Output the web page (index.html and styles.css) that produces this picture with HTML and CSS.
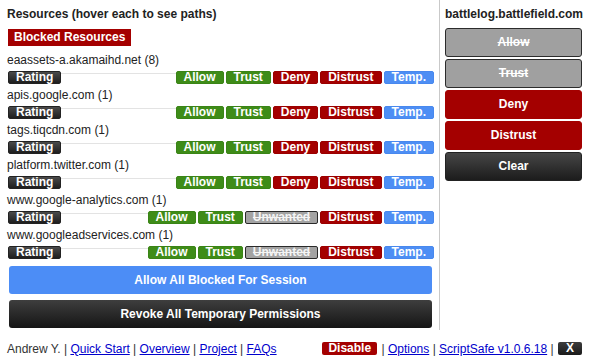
FILE: index.html
```html
<!DOCTYPE html>
<html>
<head>
<meta charset="utf-8">
<title>ScriptSafe</title>
<link rel="stylesheet" href="styles.css">
</head>
<body>
<div class="main">
  <section class="left">
    <h1 class="title">Resources (hover each to see paths)</h1>
    <div class="badge">Blocked Resources</div>
    <div class="list">
      <div class="res">
        <div class="domain">eaassets-a.akamaihd.net (8)</div>
        <div class="actions">
          <span class="btn rating">Rating</span><span class="rule"></span>
          <span class="btn green">Allow</span><span class="btn green">Trust</span><span class="btn red">Deny</span><span class="btn red">Distrust</span><span class="btn blue">Temp.</span>
        </div>
      </div>
      <div class="res">
        <div class="domain">apis.google.com (1)</div>
        <div class="actions">
          <span class="btn rating">Rating</span><span class="rule"></span>
          <span class="btn green">Allow</span><span class="btn green">Trust</span><span class="btn red">Deny</span><span class="btn red">Distrust</span><span class="btn blue">Temp.</span>
        </div>
      </div>
      <div class="res">
        <div class="domain">tags.tiqcdn.com (1)</div>
        <div class="actions">
          <span class="btn rating">Rating</span><span class="rule"></span>
          <span class="btn green">Allow</span><span class="btn green">Trust</span><span class="btn red">Deny</span><span class="btn red">Distrust</span><span class="btn blue">Temp.</span>
        </div>
      </div>
      <div class="res">
        <div class="domain">platform.twitter.com (1)</div>
        <div class="actions">
          <span class="btn rating">Rating</span><span class="rule"></span>
          <span class="btn green">Allow</span><span class="btn green">Trust</span><span class="btn red">Deny</span><span class="btn red">Distrust</span><span class="btn blue">Temp.</span>
        </div>
      </div>
      <div class="res">
        <div class="domain">www.google-analytics.com (1)</div>
        <div class="actions">
          <span class="btn rating">Rating</span><span class="rule"></span>
          <span class="btn green">Allow</span><span class="btn green">Trust</span><span class="btn off">Unwanted</span><span class="btn red">Distrust</span><span class="btn blue">Temp.</span>
        </div>
      </div>
      <div class="res">
        <div class="domain">www.googleadservices.com (1)</div>
        <div class="actions">
          <span class="btn rating">Rating</span><span class="rule"></span>
          <span class="btn green">Allow</span><span class="btn green">Trust</span><span class="btn off">Unwanted</span><span class="btn red">Distrust</span><span class="btn blue">Temp.</span>
        </div>
      </div>
    </div>
    <div class="big big-blue">Allow All Blocked For Session</div>
    <div class="big big-dark">Revoke All Temporary Permissions</div>
  </section>
  <aside class="right">
    <div class="site">battlelog.battlefield.com</div>
    <div class="sbtn s-off">Allow</div>
    <div class="sbtn s-off">Trust</div>
    <div class="sbtn s-red">Deny</div>
    <div class="sbtn s-red">Distrust</div>
    <div class="sbtn s-dark">Clear</div>
  </aside>
</div>
<footer class="footer">
  <div class="f-left">Andrew Y. <span class="pipe">|</span> <a href="#">Quick Start</a> <span class="pipe">|</span> <a href="#">Overview</a> <span class="pipe">|</span> <a href="#">Project</a> <span class="pipe">|</span> <a href="#">FAQs</a></div>
  <div class="f-right"><span class="fbtn f-red">Disable</span> <span class="pipe">|</span> <a href="#">Options</a> <span class="pipe">|</span> <a href="#">ScriptSafe v1.0.6.18</a> <span class="pipe">|</span> <span class="fbtn f-dark">X</span></div>
</footer>
</body>
</html>
```
FILE: styles.css
```css
* { box-sizing: border-box; }
html, body { margin: 0; padding: 0; background: #fff; }
body {
  font-family: "Liberation Sans", Arial, sans-serif;
  font-size: 12px;
  color: #222;
  width: 605px;
  height: 362px;
  overflow: hidden;
}
.main { display: flex; height: 330px; }
.left {
  width: 440px;
  padding: 6px 5px 0 7px;
  border-right: 1px solid #c9c9c9;
  display: flex;
  flex-direction: column;
}
.title { margin: 0; font-size: 12px; font-weight: bold; line-height: 16px; height: 16px; }
.badge {
  align-self: flex-start;
  margin: 7px 0 0 1px;
  background: #a40000;
  color: #fff;
  font-weight: bold;
  line-height: 17px;
  height: 17px;
  padding: 0 6px;
}
.list { margin-top: 6px; }
.res { height: 35px; }
.domain { line-height: 16px; height: 16px; white-space: nowrap; }
.actions { display: flex; align-items: flex-start; margin-top: 3px; padding-left: 1px; gap: 2px; }
.btn {
  display: block;
  height: 13px;
  line-height: 11px;
  padding: 0 7px;
  border: 1px solid transparent;
  border-radius: 2px;
  color: #fff;
  font-weight: bold;
  white-space: nowrap;
}
.rule { flex: 1; margin: 2px -2px 0; border-top: 1px solid #e3e3e3; }
.rating { background: linear-gradient(#4a4a4a, #1e1e1e); border-color: #222; }
.green { background: #3e8c18; border-color: #3a8416; }
.red { background: #a40000; border-color: #9a0000; }
.blue { background: #4d8ef4; border-color: #4888ee; }
.off { background: #a3a3a3; border-color: #2a2a2a; color: #f4f4f4; text-decoration: line-through; }
.big {
  height: 28px;
  line-height: 28px;
  margin: 0 2px 0 2px;
  border-radius: 3px;
  color: #fff;
  font-weight: bold;
  text-align: center;
}
.big-blue { margin-top: 4px; background: #4c8df6; }
.big-dark { margin-top: 6px; background: linear-gradient(#3e3e3e, #151515); }
.right { width: 165px; padding: 6px 0 0 5px; }
.site { font-weight: bold; line-height: 16px; height: 16px; margin-bottom: 6px; }
.sbtn {
  width: 137px;
  height: 29px;
  line-height: 27px;
  margin-bottom: 2px;
  border: 1px solid transparent;
  border-radius: 3px;
  text-align: center;
  color: #fff;
  font-weight: bold;
}
.s-off { background: #a0a0a0; border-color: #2c2c2c; text-decoration: line-through; }
.s-red { background: #a40000; border-color: #a40000; }
.s-dark { background: linear-gradient(#464646, #1c1c1c); border-color: #222; }
.footer {
  display: flex;
  justify-content: space-between;
  align-items: flex-start;
  padding: 12px 23px 0 7px;
  line-height: 14px;
  color: #333;
}
.footer a { color: #0000cc; text-decoration: underline; }
.pipe { color: #333; }
.fbtn {
  display: inline-block;
  height: 13px;
  line-height: 13px;
  padding: 0 6px;
  border-radius: 2px;
  color: #fff;
  font-weight: bold;
  vertical-align: top;
}
.f-red { background: #a40000; margin-right: 1px; }
.f-dark { background: linear-gradient(#3c3c3c, #1a1a1a); padding: 0 8px; margin-left: 1px; }
```
